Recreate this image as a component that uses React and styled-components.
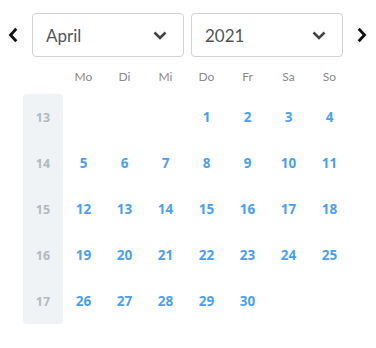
import React from 'react'
import styled, { createGlobalStyle } from 'styled-components'

const colors = {
    BLUE: '#4a9ff5',
    WEEK_BG: '#f0f3f5',
    WEEK_TEXT: '#b2b9c0',
    BORDER: '#cfd3d6',
    HEAD: '#8a8a8a'
}

const GlobalStyle = createGlobalStyle`
    body {
        margin: 0;
        background: #fff;
        font-family: Lato, "Open Sans", sans-serif;
    }
`

const Wrapper = styled.div`
    width: 376px;
    height: 348px;
    padding-top: 13px;
    box-sizing: border-box;
`

const Header = styled.div`
    display: grid;
    grid-template-columns: 25px 152px 152px 26px;
    column-gap: 7px;
    align-items: center;
`

const Arrow = styled.button`
    border: 0;
    background: none;
    height: 44px;
    display: flex;
    align-items: center;
    justify-content: flex-start;
    padding: 0 0 0 ${(p) => (p.right ? '6px' : '7px')};
`

const Select = styled.div`
    height: 44px;
    box-sizing: border-box;
    border: 1px solid ${colors.BORDER};
    border-radius: 4px;
    display: flex;
    align-items: center;
    justify-content: space-between;
    padding: 0 16px 0 13px;
    font-size: 17px;
    color: #555;
`

const Grid = styled.div`
    display: grid;
    grid-template-columns: 40px repeat(7, 41px);
    margin-left: 23px;
    margin-top: 1px;
`

const DayName = styled.div`
    height: 36px;
    display: flex;
    align-items: center;
    justify-content: center;
    font-size: 12px;
    color: ${colors.HEAD};
`

const WeekCol = styled.div`
    grid-column: 1;
    grid-row: 2 / span 5;
    background: ${colors.WEEK_BG};
    border-radius: 4px;
    display: grid;
    grid-template-rows: repeat(5, 46px);
`

const Cell = styled.div`
    height: 46px;
    display: flex;
    align-items: center;
    justify-content: center;
    font-family: "Open Sans", sans-serif;
    font-weight: bold;
    font-size: ${(p) => (p.week ? '12.5px' : '13.5px')};
    color: ${(p) => (p.week ? colors.WEEK_TEXT : colors.BLUE)};
`

const Chevron = ({ dir }) => (
    <svg width="12" height="16" viewBox="0 0 12 16">
        <path
            d={dir === 'left' ? 'M9.3 1.8 L3.5 8 L9.3 14.2' : 'M2.7 1.8 L8.5 8 L2.7 14.2'}
            fill="none"
            stroke="#111"
            strokeWidth="2.8"
        />
    </svg>
)

const Caret = () => (
    <svg width="14" height="9" viewBox="0 0 14 9">
        <path d="M1.5 1.5 L7 7 L12.5 1.5" fill="none" stroke="#444" strokeWidth="2.6" />
    </svg>
)

const dayNames = ['Mo', 'Di', 'Mi', 'Do', 'Fr', 'Sa', 'So']
const weeks = [13, 14, 15, 16, 17]

const App = () => {
    // April 2021 starts on a Thursday
    const days = []
    for (let i = 0; i < 35; i++) {
        const d = i - 2
        days.push(d >= 1 && d <= 30 ? d : null)
    }

    return (
        <Wrapper>
            <GlobalStyle />
            <Header>
                <Arrow>
                    <Chevron dir="left" />
                </Arrow>
                <Select>
                    April
                    <Caret />
                </Select>
                <Select>
                    2021
                    <Caret />
                </Select>
                <Arrow right>
                    <Chevron dir="right" />
                </Arrow>
            </Header>
            <Grid>
                <div />
                {dayNames.map((n) => (
                    <DayName key={n}>{n}</DayName>
                ))}
                <WeekCol>
                    {weeks.map((w) => (
                        <Cell week key={w}>
                            {w}
                        </Cell>
                    ))}
                </WeekCol>
                {days.map((d, i) => (
                    <Cell
                        key={i}
                        style={{ gridColumn: (i % 7) + 2, gridRow: Math.floor(i / 7) + 2 }}
                    >
                        {d}
                    </Cell>
                ))}
            </Grid>
        </Wrapper>
    )
}

export default App
